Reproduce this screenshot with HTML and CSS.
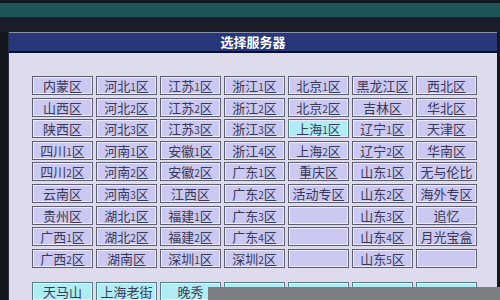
FILE: index.html
```
<!DOCTYPE html>
<html lang="zh-CN">
<head>
    <meta charset="UTF-8">
    <title>选择服务器</title>
    <link rel="stylesheet" href="styles.css">
</head>
<body>
    <div class="top_bar"></div>
    <div class="dialog">
        <div class="title">选择服务器</div>
        <div class="panel">
            <ul class="server_list">
                <li>内蒙区</li><li>河北<i>1</i>区</li><li>江苏<i>1</i>区</li><li>浙江<i>1</i>区</li><li>北京<i>1</i>区</li><li>黑龙江区</li><li>西北区</li>
                <li>山西区</li><li>河北<i>2</i>区</li><li>江苏<i>2</i>区</li><li>浙江<i>2</i>区</li><li>北京<i>2</i>区</li><li>吉林区</li><li>华北区</li>
                <li>陕西区</li><li>河北<i>3</i>区</li><li>江苏<i>3</i>区</li><li>浙江<i>3</i>区</li><li class="on">上海<i>1</i>区</li><li>辽宁<i>1</i>区</li><li>天津区</li>
                <li>四川<i>1</i>区</li><li>河南<i>1</i>区</li><li>安徽<i>1</i>区</li><li>浙江<i>4</i>区</li><li>上海<i>2</i>区</li><li>辽宁<i>2</i>区</li><li>华南区</li>
                <li>四川<i>2</i>区</li><li>河南<i>2</i>区</li><li>安徽<i>2</i>区</li><li>广东<i>1</i>区</li><li>重庆区</li><li>山东<i>1</i>区</li><li>无与伦比</li>
                <li>云南区</li><li>河南<i>3</i>区</li><li>江西区</li><li>广东<i>2</i>区</li><li>活动专区</li><li>山东<i>2</i>区</li><li>海外专区</li>
                <li>贵州区</li><li>湖北<i>1</i>区</li><li>福建<i>1</i>区</li><li>广东<i>3</i>区</li><li></li><li>山东<i>3</i>区</li><li>追忆</li>
                <li>广西<i>1</i>区</li><li>湖北<i>2</i>区</li><li>福建<i>2</i>区</li><li>广东<i>4</i>区</li><li></li><li>山东<i>4</i>区</li><li>月光宝盒</li>
                <li>广西<i>2</i>区</li><li>湖南区</li><li>深圳<i>1</i>区</li><li>深圳<i>2</i>区</li><li></li><li>山东<i>5</i>区</li><li></li>
            </ul>
            <ul class="server_list special">
                <li>天马山</li><li>上海老街</li><li>晚秀</li><li></li><li></li><li></li><li></li>
            </ul>
        </div>
    </div>
    <div class="taskbar"></div>
</body>
</html>
```

FILE: styles.css
```
html, body{
    margin: 0;
    height: 300px;
    overflow: hidden;
}
body{
    position: relative;
    background-color: #15171e;
    font-family: "Noto Sans CJK SC", sans-serif;
}
.top_bar{
    height: 14px;
    margin-top: 3px;
    background-color: #1e5559;
    border-bottom: 15px solid #1b1d28;
}
.dialog{
    margin-left: 8px;
    margin-right: 3px;
    border-left: 1px solid #2c3040;
}
.title{
    height: 18px;
    line-height: 18px;
    border-top: 1px solid #8a92ac;
    border-bottom: 2px solid #0b0f2e;
    background-color: #27377a;
    color: #fff;
    font-size: 13px;
    font-weight: bold;
    text-align: center;
}
.panel{
    height: 245px;
    padding: 23px 0 0 23px;
    background-color: #dedcec;
}
.server_list{
    list-style: none;
    margin: 0;
    padding: 0;
    display: grid;
    grid-template-columns: repeat(7, 61px);
    grid-auto-rows: 19px;
    column-gap: 3px;
    row-gap: 2.6px;
}
.server_list li{
    box-sizing: border-box;
    border: 1px solid #5e5e72;
    box-shadow: inset 0 0 0 1px #ecebff;
    background-color: #cbc8f2;
    color: #3a3a58;
    font-size: 13px;
    line-height: 18px;
    text-align: center;
}
.server_list li i{
    font-style: normal;
    font-size: 10px;
}
.server_list li.on,
.special li{
    border-color: #5a7c88;
    background-color: #b0ecf4;
}
.special{
    margin-top: 14px;
}
.taskbar{
    position: absolute;
    left: 208px;
    right: 0;
    top: 287px;
    bottom: 0;
    background-color: #7b7f83;
}
```
